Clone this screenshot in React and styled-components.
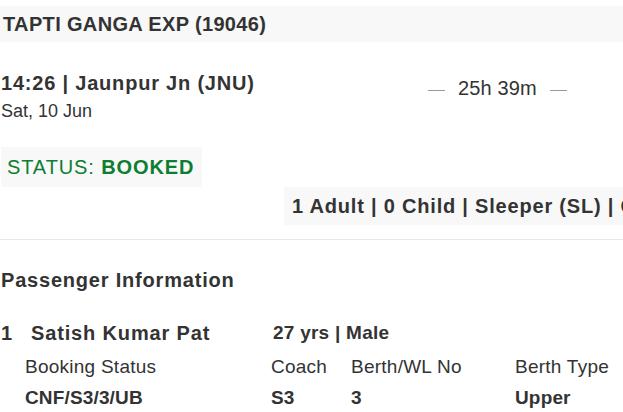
import React from "react";
import styled, { createGlobalStyle } from "styled-components";

const GlobalStyle = createGlobalStyle`
  html, body {
    margin: 0;
    padding: 0;
    background: #ffffff;
    overflow: hidden;
  }
  body {
    font-family: "Liberation Sans", Arial, sans-serif;
    color: #333333;
  }
`;

const Page = styled.div`
  width: 623px;
  padding: 6px 0 0 1px;
  box-sizing: border-box;
`;

const TrainHeader = styled.h1`
  margin: 0 0 0 -1px;
  height: 36px;
  padding-left: 3px;
  background: #f8f8f8;
  font-size: 20px;
  font-weight: bold;
  line-height: 36px;
  letter-spacing: 0.35px;
  white-space: nowrap;
`;

const Journey = styled.div`
  display: flex;
  align-items: flex-start;
  margin-top: 29px;
`;

const Departure = styled.div`
  flex: none;
  width: 427px;
`;

const StationLine = styled.div`
  font-size: 20px;
  font-weight: bold;
  line-height: 24px;
  letter-spacing: 0.8px;
  white-space: nowrap;
`;

const DateLine = styled.div`
  margin-top: 5px;
  font-size: 18px;
  line-height: 22px;
`;

const Duration = styled.div`
  display: flex;
  align-items: center;
  gap: 13px;
  padding-top: 5px;
  font-size: 20px;
  line-height: 24px;
  letter-spacing: 0.15px;
`;

const Dash = styled.span`
  display: block;
  width: 17px;
  height: 1px;
  margin-top: 5px;
  background: #9a9a9a;
`;

const StatusBadge = styled.div`
  display: inline-block;
  margin-top: 25px;
  height: 40px;
  padding: 0 8px 0 6px;
  background: #f8f8f8;
  color: #0d7d31;
  font-size: 20px;
  line-height: 40px;
  letter-spacing: 0.9px;
  white-space: nowrap;
`;

const StatusValue = styled.b`
  font-weight: bold;
`;

const ClassRow = styled.div`
  display: flex;
  padding-left: 283px;
`;

const ClassBox = styled.div`
  flex: none;
  height: 38px;
  padding: 0 20px 0 8px;
  background: #f8f8f8;
  font-size: 20px;
  font-weight: bold;
  line-height: 38px;
  letter-spacing: 0.8px;
  white-space: nowrap;
`;

const Divider = styled.hr`
  margin: 14px 0 0 -1px;
  border: none;
  border-top: 1px solid #e8e8e8;
`;

const SectionTitle = styled.h2`
  margin: 28px 0 0;
  font-size: 20px;
  font-weight: bold;
  line-height: 24px;
  letter-spacing: 0.8px;
`;

const PassengerRow = styled.div`
  display: flex;
  margin-top: 29px;
  font-weight: bold;
  line-height: 24px;
  white-space: nowrap;
`;

const Index = styled.span`
  flex: none;
  width: 30px;
  font-size: 20px;
`;

const Name = styled.span`
  flex: none;
  width: 241px;
  font-size: 20px;
  letter-spacing: 0.85px;
`;

const Meta = styled.span`
  padding-left: 1px;
  font-size: 19px;
  letter-spacing: 0.25px;
`;

const DetailGrid = styled.div`
  display: grid;
  grid-template-columns: 246px 80px 164px auto;
  padding-left: 24px;
  white-space: nowrap;
`;

const Cell = styled.div`
  font-size: 19px;
  line-height: 22px;
  font-weight: ${(p) => (p.$value ? "bold" : "normal")};
  letter-spacing: ${(p) => (p.$value ? "0.15px" : "0.25px")};
  margin-top: ${(p) => (p.$value ? "9px" : "11px")};
`;

const labels = ["Booking Status", "Coach", "Berth/WL No", "Berth Type"];
const values = ["CNF/S3/3/UB", "S3", "3", "Upper"];

export default function App() {
  return (
    <>
      <GlobalStyle />
      <Page>
        <TrainHeader>TAPTI GANGA EXP (19046)</TrainHeader>

        <Journey>
          <Departure>
            <StationLine>14:26 | Jaunpur Jn (JNU)</StationLine>
            <DateLine>Sat, 10 Jun</DateLine>
          </Departure>
          <Duration>
            <Dash />
            <span>25h 39m</span>
            <Dash />
          </Duration>
        </Journey>

        <StatusBadge>
          STATUS: <StatusValue>BOOKED</StatusValue>
        </StatusBadge>

        <ClassRow>
          <ClassBox>1 Adult | 0 Child | Sleeper (SL) | General</ClassBox>
        </ClassRow>

        <Divider />

        <SectionTitle>Passenger Information</SectionTitle>

        <PassengerRow>
          <Index>1</Index>
          <Name>Satish Kumar Pat</Name>
          <Meta>27 yrs | Male</Meta>
        </PassengerRow>

        <DetailGrid>
          {labels.map((l) => (
            <Cell key={l}>{l}</Cell>
          ))}
          {values.map((v, i) => (
            <Cell key={i} $value>
              {v}
            </Cell>
          ))}
        </DetailGrid>
      </Page>
    </>
  );
}
